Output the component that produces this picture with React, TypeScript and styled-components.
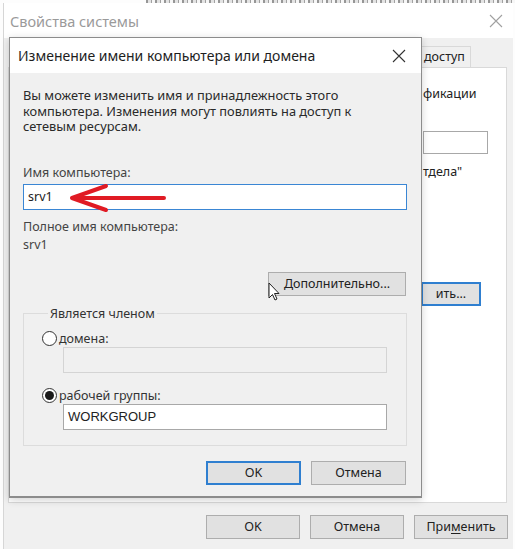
import * as React from 'react'
import styled, { createGlobalStyle } from 'styled-components'

const Global = createGlobalStyle`
  * {
    box-sizing: border-box;
  }

  html,
  body {
    margin: 0;
    padding: 0;
    width: 515px;
    height: 549px;
    overflow: hidden;
    background: #ffffff;
  }

  body {
    font-family: 'Noto Sans', 'Open Sans', sans-serif;
    color: #222;
  }
`

const Screen = styled.div`
  position: relative;
  width: 515px;
  height: 549px;
  overflow: hidden;
  background: #fdfdfd;
`

// sliver of the page behind the window: only the bottoms of its letters
const BehindStrip = styled.div`
  height: 3px;
  flex: none;
  margin-left: 146px;
  background: repeating-linear-gradient(
    90deg,
    #6a6a6a 0 2px,
    #d8d8d8 2px 5px,
    #7a7a7a 5px 6px,
    #f4f4f4 6px 9px
  );
  opacity: 0.7;
`

const Window = styled.div`
  margin-left: 3px;
  width: 510px;
  height: 546px;
  display: flex;
  flex-direction: column;
  background: #f0f0f0;
  border-left: 1px solid #d6d6d6;
`

const TitleBar = styled.div<{ $inactive?: boolean; $height: number }>`
  height: ${(p) => p.$height}px;
  flex: none;
  display: flex;
  align-items: center;
  justify-content: space-between;
  background: #ffffff;
  padding-left: ${(p) => (p.$inactive ? 6 : 8)}px;
  font-size: ${(p) => (p.$inactive ? 14.5 : 14)}px;
  color: ${(p) => (p.$inactive ? '#9a9a9a' : '#1e1e1e')};
`

const CloseGlyph = styled.svg<{ $faded?: boolean }>`
  width: 14px;
  height: 14px;
  margin-right: ${(p) => (p.$faded ? 10 : 15)}px;
  stroke: ${(p) => (p.$faded ? '#a0a0a0' : '#333')};
  stroke-width: 1.1;
  fill: none;
`

const TabStrip = styled.div`
  height: 29px;
  flex: none;
  display: flex;
  align-items: flex-end;
  padding-left: 413px;
`

const Tab = styled.div`
  height: 21px;
  padding: 0 5px 0 6px;
  background: #f0f0f0;
  border: 1px solid #d9d9d9;
  border-bottom: none;
  font-size: 12.5px;
  line-height: 20px;
  color: #222;
`

const TabPanel = styled.div`
  margin: 0 6px 0 4px;
  height: 436px;
  flex: none;
  background: #ffffff;
  border: 1px solid #d9d9d9;
  display: flex;
  flex-direction: column;
  align-items: flex-start;
  padding: 18px 0 0 414px;
  font-size: 12.5px;
  color: #222;
`

const PanelText = styled.div<{ $top: number }>`
  margin-top: ${(p) => p.$top}px;
  white-space: nowrap;
  line-height: 16px;
`

const PanelField = styled.div`
  margin-top: 29px;
  width: 65px;
  height: 23px;
  border: 1px solid #a8a8a8;
  background: #fff;
`

const Footer = styled.div`
  flex: 1;
  display: flex;
  justify-content: flex-end;
  align-items: flex-start;
  gap: 10px;
  padding: 12px 5px 0 0;
`

const Button = styled.button<{ $width: number; $default?: boolean }>`
  width: ${(p) => p.$width}px;
  height: 24px;
  padding: 0;
  margin: 0;
  flex: none;
  background: #e1e1e1;
  border: ${(p) => (p.$default ? '2px solid #2f7fd0' : '1px solid #adadad')};
  font-family: 'Noto Sans', 'Open Sans', sans-serif;
  font-size: 12.5px;
  color: #222;
  line-height: 20px;

  & u {
    text-decoration-thickness: 1px;
    text-underline-offset: 2px;
  }
`

const PanelButton = styled(Button)`
  margin-top: 102px;
  margin-left: -2px;
`

const Dialog = styled.div`
  position: absolute;
  left: 9px;
  top: 37px;
  width: 413px;
  height: 461px;
  display: flex;
  flex-direction: column;
  background: #f0f0f0;
  border: 1px solid #8c8c8c;
  border-bottom: 2px solid #8c8c8c;
  box-shadow: 0 2px 8px rgba(0, 0, 0, 0.18);
`

const DialogBody = styled.div`
  flex: 1;
  display: flex;
  flex-direction: column;
  padding: 15px 14px 0 13px;
  font-size: 12.5px;
  color: #2a2a2a;
`

const Paragraph = styled.p`
  margin: 0;
  line-height: 15.5px;
  width: 352px;
  font-size: 12.8px;
`

const Label = styled.div<{ $top: number }>`
  margin-top: ${(p) => p.$top}px;
  line-height: 16px;
  color: #444;
`

const Field = styled.div<{ $focused?: boolean; $disabled?: boolean; $mono?: boolean }>`
  position: relative;
  height: 26px;
  margin-top: 3px;
  display: flex;
  align-items: center;
  padding-left: 4px;
  background: ${(p) => (p.$disabled ? '#f0f0f0' : '#ffffff')};
  border: 1px solid
    ${(p) => (p.$focused ? '#3a86d4' : p.$disabled ? '#d4d4d4' : '#a8a8a8')};
  font-family: ${(p) =>
    p.$mono ? "'Liberation Sans', Arial, sans-serif" : "'Noto Sans', 'Open Sans', sans-serif"};
  font-size: ${(p) => (p.$mono ? 13 : 12.5)}px;
  color: #222;
`

const ArrowMark = styled.svg`
  position: absolute;
  left: 44px;
  top: -2px;
  width: 100px;
  height: 30px;
`

const MoreRow = styled.div`
  position: relative;
  display: flex;
  justify-content: flex-end;
  margin-top: 19px;
  padding-right: 1px;
`

const Cursor = styled.svg`
  position: absolute;
  left: 245px;
  top: 10px;
  width: 12px;
  height: 19px;
`

const GroupBox = styled.fieldset`
  margin: 10px 0 0 0;
  height: 140px;
  padding: 0 19px 0 18px;
  border: 1px solid #dcdcdc;
  display: flex;
  flex-direction: column;

  & > legend {
    padding: 0 2px;
    margin-left: 6px;
    font-size: 12.5px;
    line-height: 16px;
    color: #333;
  }
`

const RadioRow = styled.label<{ $top: number }>`
  display: flex;
  align-items: center;
  gap: 2px;
  margin-top: ${(p) => p.$top}px;
  line-height: 16px;
  color: #333;
`

const RadioDot = styled.span<{ $checked?: boolean }>`
  width: 15px;
  height: 15px;
  border-radius: 50%;
  border: 1px solid #333;
  background: #fff;
  display: flex;
  align-items: center;
  justify-content: center;

  &::after {
    content: '';
    display: ${(p) => (p.$checked ? 'block' : 'none')};
    width: 9px;
    height: 9px;
    border-radius: 50%;
    background: #1a1a1a;
  }
`

const GroupField = styled(Field)`
  margin-left: 21px;
  margin-top: 0;
`

const DialogFooter = styled.div`
  display: flex;
  justify-content: flex-end;
  gap: 10px;
  margin-top: 15px;
  padding-right: 1px;
`

const Close = ({ faded }: { faded?: boolean }) => (
  <CloseGlyph $faded={faded} viewBox="0 0 14 14">
    <path d="M1 1 L13 13 M13 1 L1 13" />
  </CloseGlyph>
)

export default function App() {
  return (
    <Screen>
      <Global />
      <BehindStrip />
      <Window>
        <TitleBar $inactive $height={35}>
          <span>Свойства системы</span>
          <Close faded />
        </TitleBar>
        <TabStrip>
          <Tab>доступ</Tab>
        </TabStrip>
        <TabPanel>
          <PanelText $top={0}>фикации</PanelText>
          <PanelField />
          <PanelText $top={10}>тдела"</PanelText>
          <PanelButton $width={60} $default>
            ить...
          </PanelButton>
        </TabPanel>
        <Footer>
          <Button $width={94}>OK</Button>
          <Button $width={94}>Отмена</Button>
          <Button $width={94}>
            При<u>м</u>енить
          </Button>
        </Footer>
      </Window>

      <Dialog>
        <TitleBar $height={35}>
          <span>Изменение имени компьютера или домена</span>
          <Close />
        </TitleBar>
        <DialogBody>
          <Paragraph>
            Вы можете изменить имя и принадлежность этого компьютера. Изменения
            могут повлиять на доступ к сетевым ресурсам.
          </Paragraph>
          <Label $top={30}>Имя компьютера:</Label>
          <Field $focused>
            srv1
            <ArrowMark viewBox="0 0 100 30">
              <path
                d="M4 15 L96 15 M4 15 L38 3 M4 15 L38 27"
                stroke="#e01b24"
                strokeWidth="4"
                strokeLinecap="round"
                fill="none"
              />
            </ArrowMark>
          </Field>
          <Label $top={9}>Полное имя компьютера:</Label>
          <Label $top={2}>srv1</Label>
          <MoreRow>
            <Button $width={138}>Дополнительно...</Button>
            <Cursor viewBox="0 0 12 19">
              <path
                d="M1 1 L1 16 L4.5 12.5 L7 18 L9 17 L6.5 11.5 L11 11.5 Z"
                fill="#fff"
                stroke="#222"
                strokeWidth="1"
                strokeLinejoin="round"
              />
            </Cursor>
          </MoreRow>
          <GroupBox>
            <legend>Является членом</legend>
            <RadioRow $top={9}>
              <RadioDot />
              домена:
            </RadioRow>
            <GroupField $disabled />
            <RadioRow $top={15}>
              <RadioDot $checked />
              рабочей группы:
            </RadioRow>
            <GroupField $mono>WORKGROUP</GroupField>
          </GroupBox>
          <DialogFooter>
            <Button $width={95} $default>
              OK
            </Button>
            <Button $width={95}>Отмена</Button>
          </DialogFooter>
        </DialogBody>
      </Dialog>
    </Screen>
  )
}
